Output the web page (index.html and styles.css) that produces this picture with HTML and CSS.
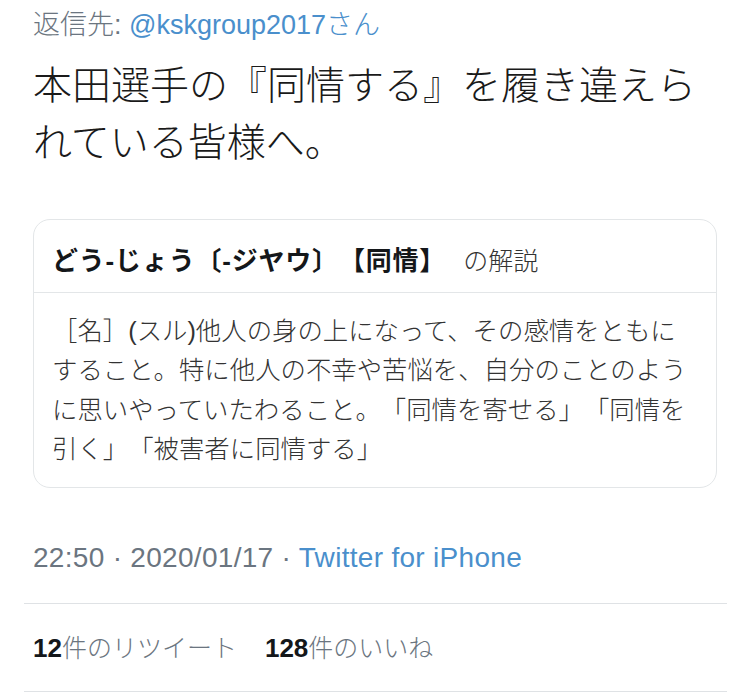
FILE: index.html
```html
<!DOCTYPE html>
<html lang="ja">

<head>
    <meta charset="UTF-8">
    <meta name="viewport" content="width=device-width, initial-scale=1.0">
    <title>Tweet</title>
    <link rel="stylesheet" href="styles.css">
</head>

<body>
    <div class="tweet">
        <div class="reply">返信先: <a href="#" class="link">@kskgroup2017さん</a></div>

        <div class="text">本田選手の『同情する』を履き違えられている皆様へ。</div>

        <div class="card">
            <div class="card-head">
                <b>どう-じょう〔-ジヤウ〕【同情】</b> <span>の解説</span>
            </div>
            <div class="card-body">
                ［名］(スル)他人の身の上になって、その感情をともにすること。特に他人の不幸や苦悩を、自分のことのように思いやっていたわること。「同情を寄せる」「同情を引く」「被害者に同情する」
            </div>
        </div>

        <div class="meta">22:50 · 2020/01/17 · <a href="#" class="link">Twitter for iPhone</a></div>

        <div class="stats">
            <span><b>12</b>件のリツイート</span>
            <span><b>128</b>件のいいね</span>
        </div>
    </div>
</body>

</html>
```

FILE: styles.css
```css
body {
    margin: 0;
    padding: 0;
    background-color: #fff;
    font-family: "Liberation Sans", "Noto Sans CJK JP", sans-serif;
    font-weight: 300;
    color: #14171a;
    text-spacing-trim: space-all;
}

.tweet {
    padding: 7px 23px 0 24px;
}

.link {
    color: #4a8fcc;
    text-decoration: none;
}

.reply {
    padding-left: 9px;
    font-size: 27px;
    line-height: 36px;
    color: #6b7580;
}

.text {
    margin-top: 14px;
    padding-left: 9px;
    font-size: 39px;
    line-height: 57px;
    color: #1a1a1a;
}

.card {
    margin: 48px 10px 0 9px;
    border: 1px solid #e3e6e8;
    border-radius: 17px;
}

.card-head {
    padding: 23px 18px 13px;
    font-size: 26px;
    line-height: 36px;
    border-bottom: 1px solid #e3e6e8;
}

.card-head b {
    font-weight: bold;
    letter-spacing: 0.8px;
}

.card-head span {
    margin-left: 10px;
    font-size: 25px;
    color: #333;
}

.card-body {
    padding: 19px 18px 18px;
    font-size: 25.4px;
    line-height: 39.3px;
    color: #333;
}

.meta {
    padding: 52px 0 27px 9px;
    font-size: 28px;
    letter-spacing: 0.3px;
    line-height: 36px;
    color: #6b7580;
    border-bottom: 1px solid #dfe2e5;
}

.stats {
    display: flex;
    gap: 28px;
    padding: 26px 0 25px 9px;
    font-size: 25px;
    line-height: 36px;
    color: #6b7580;
    border-bottom: 1px solid #dfe2e5;
}

.stats b {
    color: #14171a;
    font-size: 26px;
    font-weight: bold;
}
```
